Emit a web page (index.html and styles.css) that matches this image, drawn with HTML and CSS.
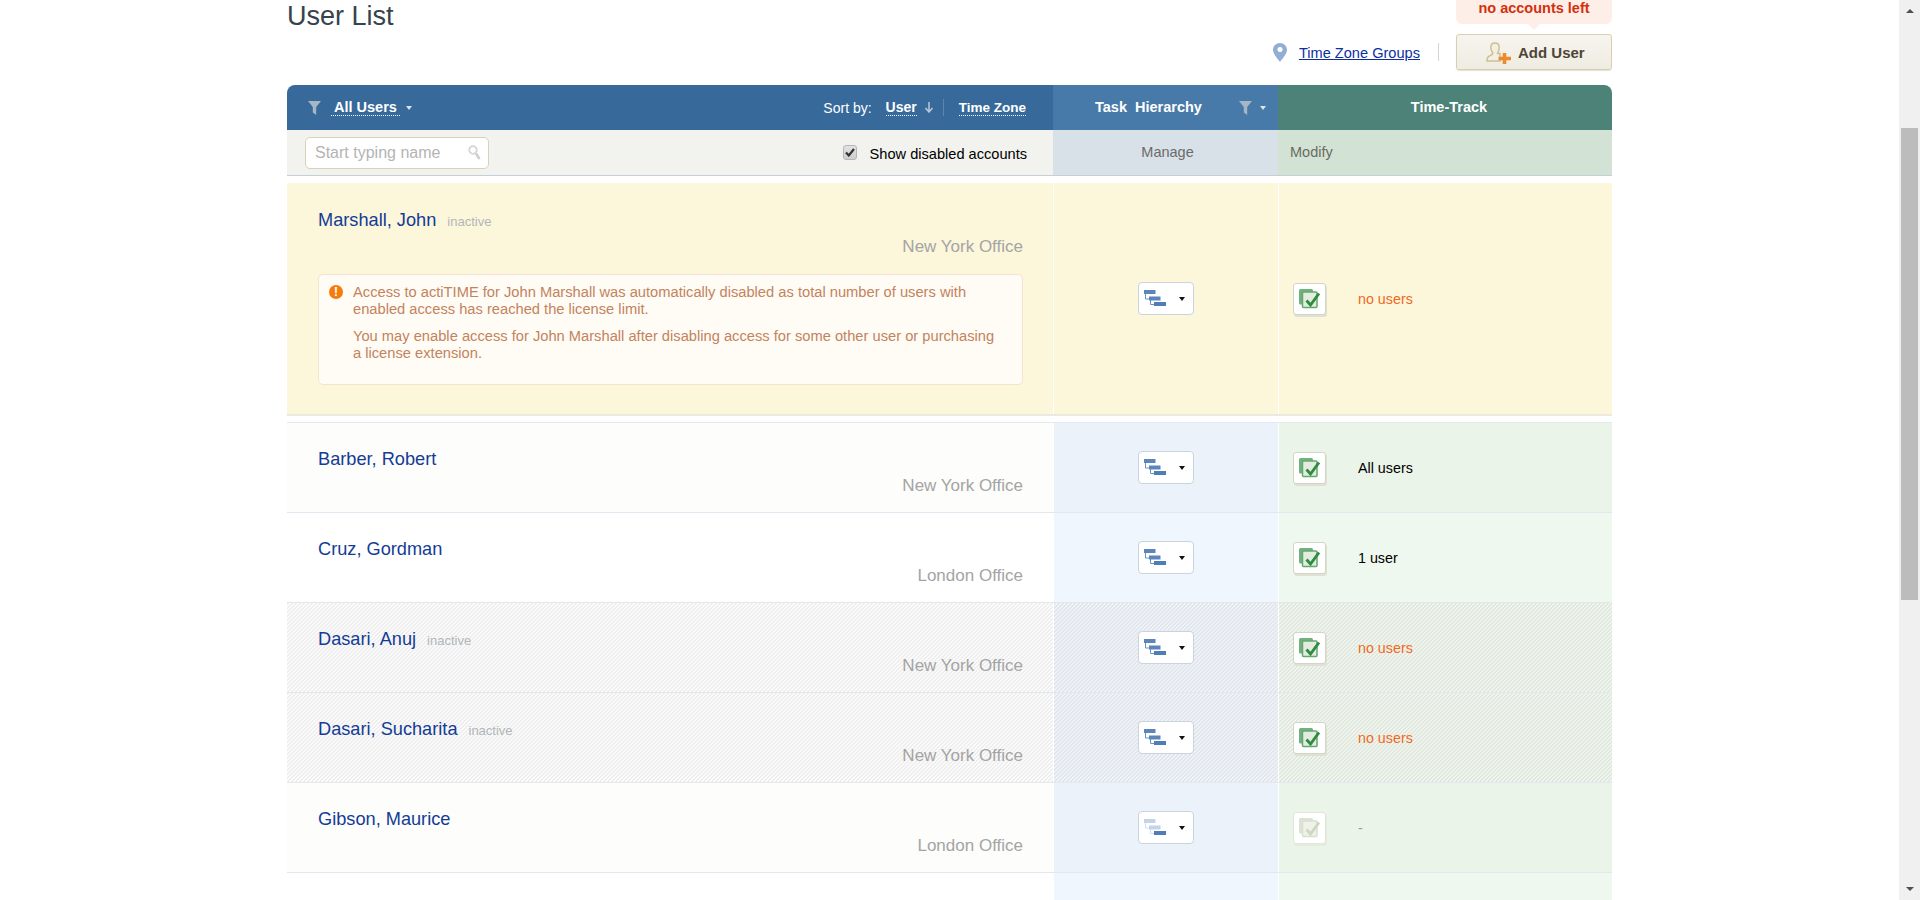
FILE: index.html
```html
<!DOCTYPE html>
<html lang="en">
<head>
    <meta charset="UTF-8">
    <title>User List</title>
    <link rel="stylesheet" href="styles.css">
</head>
<body>
    <svg class="defs" width="0" height="0">
        <symbol id="tree" viewBox="0 0 30 20">
            <path d="M1.500 4V9H6M6.500 10V14.500H11" fill="none" stroke="#6d93c4" stroke-width="1"/>
            <rect x="0" y="0" width="11.500" height="4" fill="#5b85bb"/>
            <rect x="5" y="6.500" width="11.500" height="4" fill="#5b85bb"/>
            <rect x="10" y="12" width="12" height="4" fill="#4f7db8"/>
        </symbol>
        <symbol id="tree-off" viewBox="0 0 30 20">
            <path d="M1.500 4V9H6M6.500 10V14.500H11" fill="none" stroke="#d5e0ee" stroke-width="1"/>
            <rect x="0" y="0" width="11.500" height="4" fill="#c3d3e8"/>
            <rect x="5" y="6.500" width="11.500" height="4" fill="#c3d3e8"/>
            <rect x="10" y="12" width="12" height="4" fill="#4f7db8"/>
        </symbol>
        <symbol id="pages" viewBox="0 0 22 20">
            <rect x="0" y="0" width="14" height="15.500" rx="1.500" fill="#72b07c"/>
            <rect x="3.500" y="3" width="14.500" height="15.500" rx="1" fill="#e4ece1" stroke="#62a96f" stroke-width="1.500"/>
            <path d="M7.500 11.500L11.500 16L20 4.500" fill="none" stroke="#2f8c3f" stroke-width="2.900"/>
        </symbol>
        <symbol id="pages-off" viewBox="0 0 22 20">
            <rect x="0" y="0" width="14" height="15.500" rx="1.500" fill="#dbe3d2"/>
            <rect x="3.500" y="3" width="14.500" height="15.500" rx="1" fill="#eef2e8" stroke="#d8e0ce" stroke-width="1.500"/>
            <path d="M7.500 11.500L11.500 16L20 4.500" fill="none" stroke="#ccd8c2" stroke-width="2.900"/>
        </symbol>
        <symbol id="funnel" viewBox="0 0 13 14">
            <path d="M0 0H13L8.200 6V14L4.800 11.500V6Z"/>
        </symbol>
    </svg>

    <div class="page">
        <main class="content">
            <header class="top">
                <h1 class="title">User List</h1>
                <div class="top-right">
                    <div class="limit">no accounts left</div>
                    <div class="actions">
                        <svg class="pin" width="14" height="19" viewBox="0 0 14 19">
                            <path d="M7 0C3 0 0 3 0 6.800C0 11 4.500 15.500 7 19C9.500 15.500 14 11 14 6.800C14 3 11 0 7 0Z" fill="#93aed3"/>
                            <circle cx="7" cy="6.500" r="2.500" fill="#fff"/>
                        </svg>
                        <a class="tz-link" href="#">Time Zone Groups</a>
                        <span class="vsep"></span>
                        <button class="add-btn">
                            <svg width="26" height="24" viewBox="0 0 26 24">
                                <path d="M9 3C6 3 4.800 5 4.800 7.500C4.800 10 5.800 11.500 6.800 13C6.800 15 4.500 15.500 2.800 16.300C1 17.200 1 19 1 21H14V13.500H11.500C12.500 11.500 13.200 10 13.200 7.500C13.200 5 12 3 9 3Z" fill="#f3efe2" stroke="#cdbf94" stroke-width="1.500"/>
                                <path d="M18.500 13V24M12.500 18.500H25" stroke="#ec8a2c" stroke-width="3.600"/>
                            </svg>
                            Add User
                        </button>
                    </div>
                </div>
            </header>

            <div class="grid head-row">
                <div class="head-main">
                    <svg class="funnel" width="13" height="14"><use href="#funnel"/></svg>
                    <a class="dotted filter-name" href="#">All Users</a>
                    <span class="caret"></span>
                    <span class="sort">
                        <span class="sort-label">Sort by:</span>
                        <a class="dotted sort-user" href="#">User</a>
                        <svg class="sort-arrow" width="10" height="11" viewBox="0 0 10 11">
                            <path d="M5 0V9M1.500 6L5 10L8.500 6" fill="none" stroke="#b9c9da" stroke-width="1.500"/>
                        </svg>
                        <span class="sort-sep"></span>
                        <a class="dotted" href="#">Time Zone</a>
                    </span>
                </div>
                <div class="head-hier">
                    <span class="head-hier-name">Task&nbsp; Hierarchy</span>
                    <svg class="funnel" width="13" height="14"><use href="#funnel"/></svg>
                    <span class="caret"></span>
                </div>
                <div class="head-track">Time-Track</div>
            </div>

            <div class="grid sub-row">
                <div class="sub-main">
                    <div class="search">
                        <span>Start typing name</span>
                        <svg width="13" height="16" viewBox="0 0 13 16">
                            <circle cx="5" cy="5" r="3.800" fill="none" stroke="#d5d5d5" stroke-width="1.800"/>
                            <path d="M8 8.500L11.500 14" stroke="#cfcfcf" stroke-width="2.600"/>
                        </svg>
                    </div>
                    <label class="show-off">
                        <span class="tick-box">
                            <svg width="10" height="9" viewBox="0 0 10 9">
                                <path d="M1 4.500L3.800 7.500L9 1" fill="none" stroke="#333" stroke-width="2.200"/>
                            </svg>
                        </span>
                        Show disabled accounts
                    </label>
                </div>
                <div class="sub-hier">Manage</div>
                <div class="sub-track">Modify</div>
            </div>

            <section class="grid row row-alert">
                <div class="cell-main">
                    <a class="name" href="#">Marshall, John</a><span class="inactive">inactive</span>
                    <div class="office">New York Office</div>
                    <div class="notice">
                        <span class="notice-mark">!</span>
                        <p>Access to actiTIME for John Marshall was automatically disabled as total number of users with enabled access has reached the license limit.</p>
                        <p>You may enable access for John Marshall after disabling access for some other user or purchasing a license extension.</p>
                    </div>
                </div>
                <div class="cell-hier">
                    <button class="tree-btn"><svg width="30" height="20"><use href="#tree"/></svg><span class="caret dark"></span></button>
                </div>
                <div class="cell-track">
                    <span class="check-btn"><svg width="22" height="20"><use href="#pages"/></svg></span>
                    <span class="scope none">no users</span>
                </div>
            </section>

            <section class="grid row row-odd">
                <div class="cell-main">
                    <a class="name" href="#">Barber, Robert</a>
                    <div class="office">New York Office</div>
                </div>
                <div class="cell-hier">
                    <button class="tree-btn"><svg width="30" height="20"><use href="#tree"/></svg><span class="caret dark"></span></button>
                </div>
                <div class="cell-track">
                    <span class="check-btn"><svg width="22" height="20"><use href="#pages"/></svg></span>
                    <span class="scope">All users</span>
                </div>
            </section>

            <section class="grid row row-even">
                <div class="cell-main">
                    <a class="name" href="#">Cruz, Gordman</a>
                    <div class="office">London Office</div>
                </div>
                <div class="cell-hier">
                    <button class="tree-btn"><svg width="30" height="20"><use href="#tree"/></svg><span class="caret dark"></span></button>
                </div>
                <div class="cell-track">
                    <span class="check-btn"><svg width="22" height="20"><use href="#pages"/></svg></span>
                    <span class="scope">1 user</span>
                </div>
            </section>

            <section class="grid row row-off">
                <div class="cell-main">
                    <a class="name" href="#">Dasari, Anuj</a><span class="inactive">inactive</span>
                    <div class="office">New York Office</div>
                </div>
                <div class="cell-hier">
                    <button class="tree-btn"><svg width="30" height="20"><use href="#tree"/></svg><span class="caret dark"></span></button>
                </div>
                <div class="cell-track">
                    <span class="check-btn"><svg width="22" height="20"><use href="#pages"/></svg></span>
                    <span class="scope none">no users</span>
                </div>
            </section>

            <section class="grid row row-off">
                <div class="cell-main">
                    <a class="name" href="#">Dasari, Sucharita</a><span class="inactive">inactive</span>
                    <div class="office">New York Office</div>
                </div>
                <div class="cell-hier">
                    <button class="tree-btn"><svg width="30" height="20"><use href="#tree"/></svg><span class="caret dark"></span></button>
                </div>
                <div class="cell-track">
                    <span class="check-btn"><svg width="22" height="20"><use href="#pages"/></svg></span>
                    <span class="scope none">no users</span>
                </div>
            </section>

            <section class="grid row row-odd">
                <div class="cell-main">
                    <a class="name" href="#">Gibson, Maurice</a>
                    <div class="office">London Office</div>
                </div>
                <div class="cell-hier">
                    <button class="tree-btn"><svg width="30" height="20"><use href="#tree-off"/></svg><span class="caret dark"></span></button>
                </div>
                <div class="cell-track">
                    <span class="check-btn faded"><svg width="22" height="20"><use href="#pages-off"/></svg></span>
                    <span class="scope muted">-</span>
                </div>
            </section>

            <section class="grid row row-even">
                <div class="cell-main"></div>
                <div class="cell-hier"></div>
                <div class="cell-track"></div>
            </section>
        </main>

        <aside class="scrollbar">
            <span class="arrow-up"></span>
            <span class="thumb"></span>
            <span class="arrow-down"></span>
        </aside>
    </div>
</body>
</html>
```

FILE: styles.css
```css
html, body {
    margin: 0;
    height: 900px;
    overflow: hidden;
}
body {
    font-family: "Liberation Sans", Arial, sans-serif;
    font-size: 14px;
    color: #000;
    background-color: #fff;
}
.defs {
    display: none;
}
.page {
    display: flex;
    height: 900px;
}
.content {
    width: 1325px;
    margin: 0 auto;
    overflow: hidden;
}

/* top area */
.top {
    display: flex;
    justify-content: space-between;
    height: 85px;
}
.title {
    margin: 0;
    font-size: 27px;
    font-weight: normal;
    line-height: 32px;
    color: #36434e;
}
.top-right {
    display: flex;
    flex-direction: column;
    align-items: flex-end;
}
.limit {
    position: relative;
    width: 156px;
    height: 24px;
    line-height: 17px;
    text-align: center;
    font-size: 14.500px;
    font-weight: bold;
    color: #d4300c;
    background-color: #fdeee7;
    border-radius: 0 0 6px 6px;
}
.limit::after {
    content: "";
    position: absolute;
    left: 0;
    right: 0;
    margin: auto;
    top: 24px;
    width: 0;
    border: 6px solid transparent;
    border-bottom: none;
    border-top-color: #fdeee7;
}
.actions {
    display: flex;
    align-items: center;
    margin-top: 10px;
}
.pin {
    margin-right: 12px;
}
.tz-link {
    margin-top: 2px;
    font-size: 14.600px;
    color: #0b2f9f;
}
.vsep {
    width: 1px;
    height: 18px;
    margin: 0 17px 0 18px;
    background-color: #ced6de;
}
.add-btn {
    display: flex;
    align-items: center;
    gap: 6px;
    width: 156px;
    height: 36px;
    padding: 0 0 0 29px;
    font-family: inherit;
    font-size: 15px;
    font-weight: bold;
    color: #4f4536;
    background: linear-gradient(#f6f4ee, #efece2);
    border: 1px solid #d8cfb2;
    border-radius: 3px;
    box-shadow: 0 1px 1px #e2e0d8;
}

/* table */
.grid {
    display: grid;
    grid-template-columns: 766px 225px 334px;
}
.head-row {
    height: 45px;
    font-size: 14.500px;
    color: #fff;
    font-weight: bold;
}
.head-main {
    display: flex;
    align-items: center;
    padding: 0 27px 0 21px;
    background-color: #376a9a;
    border-radius: 8px 0 0 0;
}
.funnel {
    fill: #a6b6c6;
}
.dotted {
    color: #fff;
    text-decoration: none;
    border-bottom: 1px dotted #fff;
    line-height: 15px;
}
.filter-name {
    margin-left: 10px;
    padding: 0 3px;
}
.caret {
    width: 0;
    margin-left: 6px;
    border: 3.500px solid transparent;
    border-bottom: none;
    border-top: 4px solid #dbe4ee;
}
.caret.dark {
    border-top-color: #111;
}
.sort {
    display: flex;
    align-items: center;
    margin-left: auto;
    font-size: 13.500px;
}
.sort-label {
    margin-right: 14px;
    font-size: 14px;
    font-weight: normal;
}
.sort-user {
    font-size: 14px;
}
.sort-arrow {
    margin-left: 7px;
}
.sort-sep {
    width: 1px;
    height: 17px;
    margin: 0 15px 0 9px;
    background-color: #5c86ad;
}
.head-hier {
    display: flex;
    align-items: center;
    padding-left: 42px;
    background-color: #477aa9;
}
.head-hier-name {
    margin-top: -2px;
}
.head-hier .funnel {
    margin-left: 37px;
}
.head-hier .caret {
    margin-left: 8px;
}
.head-track {
    padding-left: 8px;
    line-height: 45px;
    text-align: center;
    background-color: #4c8278;
    border-radius: 0 8px 0 0;
}
.sub-row {
    height: 45px;
    font-size: 14.500px;
    border-bottom: 1px solid #c6cfd6;
}
.sub-main {
    display: flex;
    align-items: center;
    justify-content: space-between;
    padding: 0 26px 0 18px;
    background-color: #f2f3ee;
}
.search {
    display: flex;
    align-items: center;
    justify-content: space-between;
    box-sizing: border-box;
    width: 184px;
    height: 32px;
    padding: 0 7px 0 9px;
    font-size: 16px;
    color: #b4b4b4;
    background-color: #fff;
    border: 1px solid #d8d2b8;
    border-radius: 5px;
}
.show-off {
    display: flex;
    align-items: center;
    gap: 13px;
    margin-top: 3px;
    font-size: 14.600px;
}
.tick-box {
    display: flex;
    align-items: center;
    justify-content: center;
    box-sizing: border-box;
    width: 14px;
    height: 15px;
    margin-top: -3px;
    background: linear-gradient(#e2e2e2, #cfcfcf);
    border: 1px solid #b5b5b5;
    border-radius: 3px;
}
.sub-hier {
    padding-left: 4px;
    line-height: 45px;
    text-align: center;
    color: #6b6b6b;
    background-color: #d8e0e8;
}
.sub-track {
    padding-left: 12px;
    line-height: 45px;
    color: #6b6b5f;
    background-color: #d2e3d5;
}

/* rows */
.row {
    height: 90px;
    box-sizing: border-box;
    border-bottom: 1px solid #e1e8f0;
}
.cell-main {
    padding: 25px 30px 0 31px;
}
.cell-hier,
.cell-track {
    display: flex;
    align-items: center;
    border-left: 1px solid #fff;
}
.cell-hier {
    justify-content: center;
}
.cell-track {
    padding-left: 14px;
}
.name {
    font-size: 18.200px;
    line-height: 22px;
    color: #143c96;
    text-decoration: none;
}
.inactive {
    margin-left: 11px;
    font-size: 13px;
    color: #b1b6b9;
}
.office {
    margin-top: 6px;
    font-size: 17px;
    line-height: 20px;
    text-align: right;
    color: #a4a4a4;
}
.row-alert {
    height: 233px;
    margin: 7px 0 6px;
    border-bottom: 2px solid #eceade;
    background-color: #fcf6db;
}
.row-alert + .row {
    height: 91px;
    border-top: 1px solid #e3e9f0;
}
.row-alert .cell-main {
    padding-top: 26px;
}
.notice {
    position: relative;
    box-sizing: border-box;
    height: 111px;
    margin-top: 17px;
    padding: 9px 20px 0 34px;
    font-size: 14.700px;
    line-height: 17px;
    color: #c3835e;
    background-color: #fffcf5;
    border: 1px solid #f6e2d2;
    border-radius: 5px;
}
.notice p {
    margin: 0 0 10px;
}
.notice-mark {
    position: absolute;
    left: 10px;
    top: 10px;
    width: 14px;
    height: 14px;
    border-radius: 50%;
    text-align: center;
    line-height: 14px;
    font-size: 12px;
    font-weight: bold;
    color: #fff;
    background-color: #f47c0c;
}
.row-odd .cell-main { background-color: #fdfdfb; }
.row-odd .cell-hier { background-color: #ebf2fa; }
.row-odd .cell-track { background-color: #ebf4e9; }
.row-even .cell-main { background-color: #fff; }
.row-even .cell-hier { background-color: #f0f6fd; }
.row-even .cell-track { background-color: #eff8ee; }
.row-off .cell-hier,
.row-off .cell-main,
.row-off .cell-track {
    background-size: 4px 4px;
}
.row-off .cell-main {
    background-image: linear-gradient(135deg, #eeeeee 25%, #fbfbfb 25%, #fbfbfb 50%, #eeeeee 50%, #eeeeee 75%, #fbfbfb 75%);
}
.row-off .cell-hier {
    background-image: linear-gradient(135deg, #e0e6ec 25%, #eff3f7 25%, #eff3f7 50%, #e0e6ec 50%, #e0e6ec 75%, #eff3f7 75%);
}
.row-off .cell-track {
    background-image: linear-gradient(135deg, #e0e8de 25%, #f1f5ef 25%, #f1f5ef 50%, #e0e8de 50%, #e0e8de 75%, #f1f5ef 75%);
}
.tree-btn {
    display: flex;
    align-items: center;
    box-sizing: border-box;
    width: 56px;
    height: 33px;
    padding: 0 0 0 5px;
    background-color: #fff;
    border: 1px solid #c9d4e0;
    border-radius: 4px;
}
.tree-btn svg {
    margin-top: 3px;
}
.tree-btn .caret {
    margin-left: 5px;
}
.check-btn {
    display: flex;
    align-items: center;
    justify-content: center;
    box-sizing: border-box;
    width: 33px;
    height: 32px;
    background-color: #fff;
    border: 1px solid #d3d6c6;
    border-radius: 3px;
    box-shadow: 1px 2px 0 #dfe2d2;
}
.check-btn.faded {
    border-color: #e2e6d8;
    box-shadow: 1px 2px 0 #e6ebdc;
}
.scope {
    margin-left: 32px;
    font-size: 14.300px;
}
.scope.none {
    color: #f2681c;
}
.scope.muted {
    color: #9a9a9a;
}

/* window scrollbar */
.scrollbar {
    display: flex;
    flex-direction: column;
    align-items: center;
    width: 21px;
    background-color: #f0f0f0;
}
.arrow-up,
.arrow-down {
    width: 0;
    border: 4px solid transparent;
}
.arrow-up {
    margin-top: 9px;
    border-top: none;
    border-bottom-color: #505050;
}
.thumb {
    width: 17px;
    height: 472px;
    margin-top: 115px;
    background-color: #bcbcbc;
}
.arrow-down {
    margin-top: auto;
    margin-bottom: 9px;
    border-bottom: none;
    border-top-color: #505050;
}
```
